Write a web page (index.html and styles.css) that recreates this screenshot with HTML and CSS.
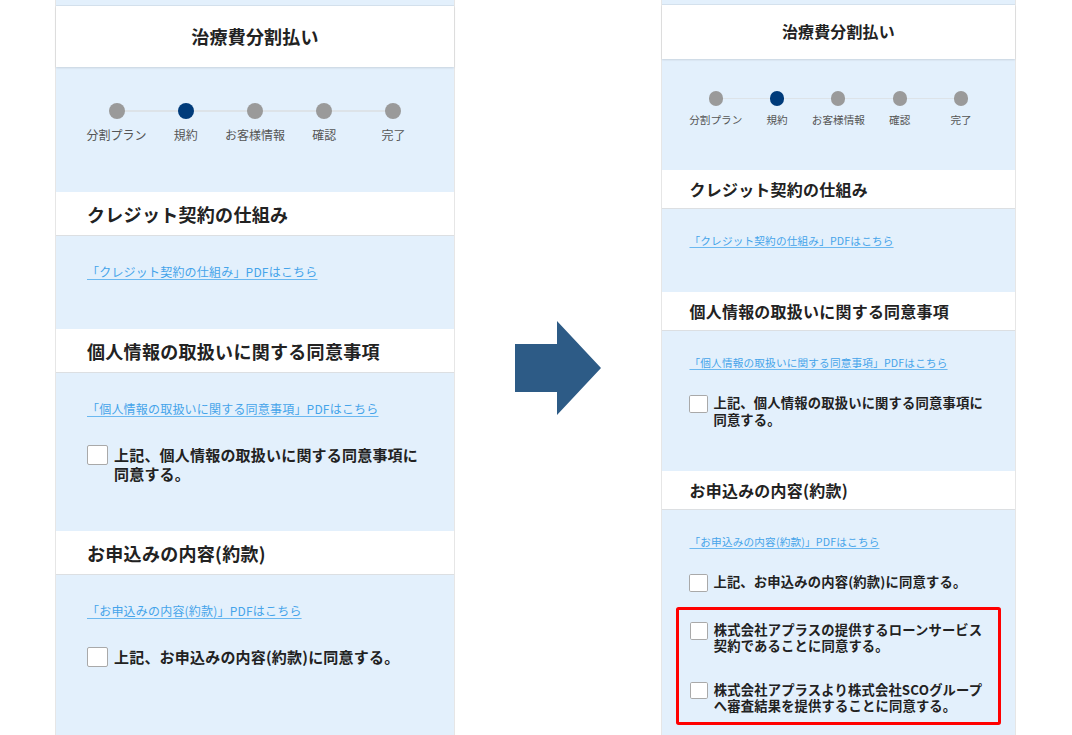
FILE: index.html
```html
<!DOCTYPE html>
<html lang="ja">
<head>
  <meta charset="UTF-8" />
  <meta name="viewport" content="width=device-width, initial-scale=1.0" />
  <title>治療費分割払い 規約画面の変更</title>
  <link rel="stylesheet" href="styles.css">
</head>
<body>
  <main class="slide">

    <!-- Before -->
    <div class="screen">
      <div class="screen-top"></div>
      <header class="screen-header">
        <h1>治療費分割払い</h1>
      </header>

      <ol class="steps">
        <li class="step">分割プラン</li>
        <li class="step is-current">規約</li>
        <li class="step">お客様情報</li>
        <li class="step">確認</li>
        <li class="step">完了</li>
      </ol>

      <section class="terms">
        <h2>クレジット契約の仕組み</h2>
        <div class="terms-body">
          <a href="#">「クレジット契約の仕組み」PDFはこちら</a>
        </div>
      </section>

      <section class="terms">
        <h2>個人情報の取扱いに関する同意事項</h2>
        <div class="terms-body">
          <a href="#">「個人情報の取扱いに関する同意事項」PDFはこちら</a>
          <label class="agree"><span class="box"></span><span>上記、個人情報の取扱いに関する同意事項に同意する。</span></label>
        </div>
      </section>

      <section class="terms">
        <h2>お申込みの内容(約款)</h2>
        <div class="terms-body">
          <a href="#">「お申込みの内容(約款)」PDFはこちら</a>
          <label class="agree"><span class="box"></span><span>上記、お申込みの内容(約款)に同意する。</span></label>
        </div>
      </section>
    </div>

    <!-- Arrow -->
    <div class="arrow">
      <svg width="86" height="94" viewBox="0 0 86 94">
        <polygon points="0,23 42,23 42,0 86,47 42,94 42,71 0,71" fill="#2d5b86" />
      </svg>
    </div>

    <!-- After -->
    <div class="screen screen-small">
      <div class="screen-top"></div>
      <header class="screen-header">
        <h1>治療費分割払い</h1>
      </header>

      <ol class="steps">
        <li class="step">分割プラン</li>
        <li class="step is-current">規約</li>
        <li class="step">お客様情報</li>
        <li class="step">確認</li>
        <li class="step">完了</li>
      </ol>

      <section class="terms">
        <h2>クレジット契約の仕組み</h2>
        <div class="terms-body">
          <a href="#">「クレジット契約の仕組み」PDFはこちら</a>
        </div>
      </section>

      <section class="terms">
        <h2>個人情報の取扱いに関する同意事項</h2>
        <div class="terms-body">
          <a href="#">「個人情報の取扱いに関する同意事項」PDFはこちら</a>
          <label class="agree"><span class="box"></span><span>上記、個人情報の取扱いに関する同意事項に同意する。</span></label>
        </div>
      </section>

      <section class="terms">
        <h2>お申込みの内容(約款)</h2>
        <div class="terms-body">
          <a href="#">「お申込みの内容(約款)」PDFはこちら</a>
          <label class="agree"><span class="box"></span><span>上記、お申込みの内容(約款)に同意する。</span></label>
          <div class="highlight">
            <label class="agree"><span class="box"></span><span>株式会社アプラスの提供するローンサービス契約であることに同意する。</span></label>
            <label class="agree"><span class="box"></span><span>株式会社アプラスより株式会社SCOグループへ審査結果を提供することに同意する。</span></label>
          </div>
        </div>
      </section>
    </div>

  </main>
</body>
</html>
```

FILE: styles.css
```css
/* Global Styles */
* {
  margin: 0;
  padding: 0;
  box-sizing: border-box;
}
html, body {
  background: #fff;
}
body {
  font-family: "Noto Sans CJK JP", "Noto Sans", sans-serif;
  color: #222;
  overflow: hidden;
}
a {
  color: inherit;
}

/* Slide */
.slide {
  display: flex;
  align-items: flex-start;
  height: 735px;
  padding-left: 55px;
  overflow: hidden;
}
.arrow {
  align-self: center;
  margin: 0 60px;
  line-height: 0;
}

/* Phone screen */
.screen {
  width: 400px;
  height: 735px;
  flex-shrink: 0;
  background: #e3f0fc;
  border-left: 1px solid #e6e6e6;
  border-right: 1px solid #e6e6e6;
}
.screen-small {
  zoom: 0.887;
  height: 829px;
}
.screen-top {
  height: 6px;
  border-bottom: 1px solid #d5e2ee;
}
.screen-header {
  background: #fff;
  padding: 17px 0;
  text-align: center;
  box-shadow: 0 1px 2px rgba(0,0,0,0.12);
  position: relative;
}
.screen-header h1 {
  font-size: 18px;
  line-height: 27px;
  font-weight: 700;
  letter-spacing: 0.2px;
}

/* Steps */
.steps {
  list-style: none;
  display: grid;
  grid-template-columns: repeat(5, 1fr);
  padding: 36px 26px 0;
  height: 125px;
  position: relative;
}
.steps::before {
  content: "";
  position: absolute;
  top: 43px;
  left: 61px;
  right: 61px;
  height: 2px;
  background: #dde3e8;
}
.step {
  position: relative;
  text-align: center;
  font-size: 12px;
  line-height: 16px;
  color: #555;
}
.step::before {
  content: "";
  display: block;
  width: 16px;
  height: 16px;
  margin: 0 auto 8px;
  border-radius: 50%;
  background: #9a9a9a;
}
.step.is-current::before {
  background: #003b7a;
}

/* Terms sections */
.terms h2 {
  background: #fff;
  font-size: 18px;
  line-height: 26px;
  font-weight: 700;
  letter-spacing: 0.3px;
  padding: 9px 31px 8px;
  border-bottom: 1px solid #dcdfe2;
}
.terms-body {
  padding: 27px 31px 48px;
  font-size: 12px;
  line-height: 18px;
}
.terms-body a {
  color: #45a4ea;
  letter-spacing: 0.2px;
  text-decoration: underline;
  text-decoration-color: #6bb8f0;
  text-underline-offset: 2px;
}
.agree {
  display: flex;
  align-items: flex-start;
  gap: 6px;
  margin-top: 27px;
  font-size: 15px;
  line-height: 19px;
  font-weight: 700;
  letter-spacing: 0.2px;
  color: #222;
}
.agree .box {
  flex: 0 0 21px;
  height: 20px;
  background: #fff;
  border: 1px solid #a9a9a9;
  border-radius: 2px;
}

/* Added consents */
.highlight {
  margin: 17px -15px 0;
  padding: 14px 12px 9px;
  border: 3.4px solid #f00;
  border-radius: 3px;
}
.highlight .agree {
  margin-top: 0;
  line-height: 18px;
}
.highlight .agree + .agree {
  margin-top: 31px;
}
```
